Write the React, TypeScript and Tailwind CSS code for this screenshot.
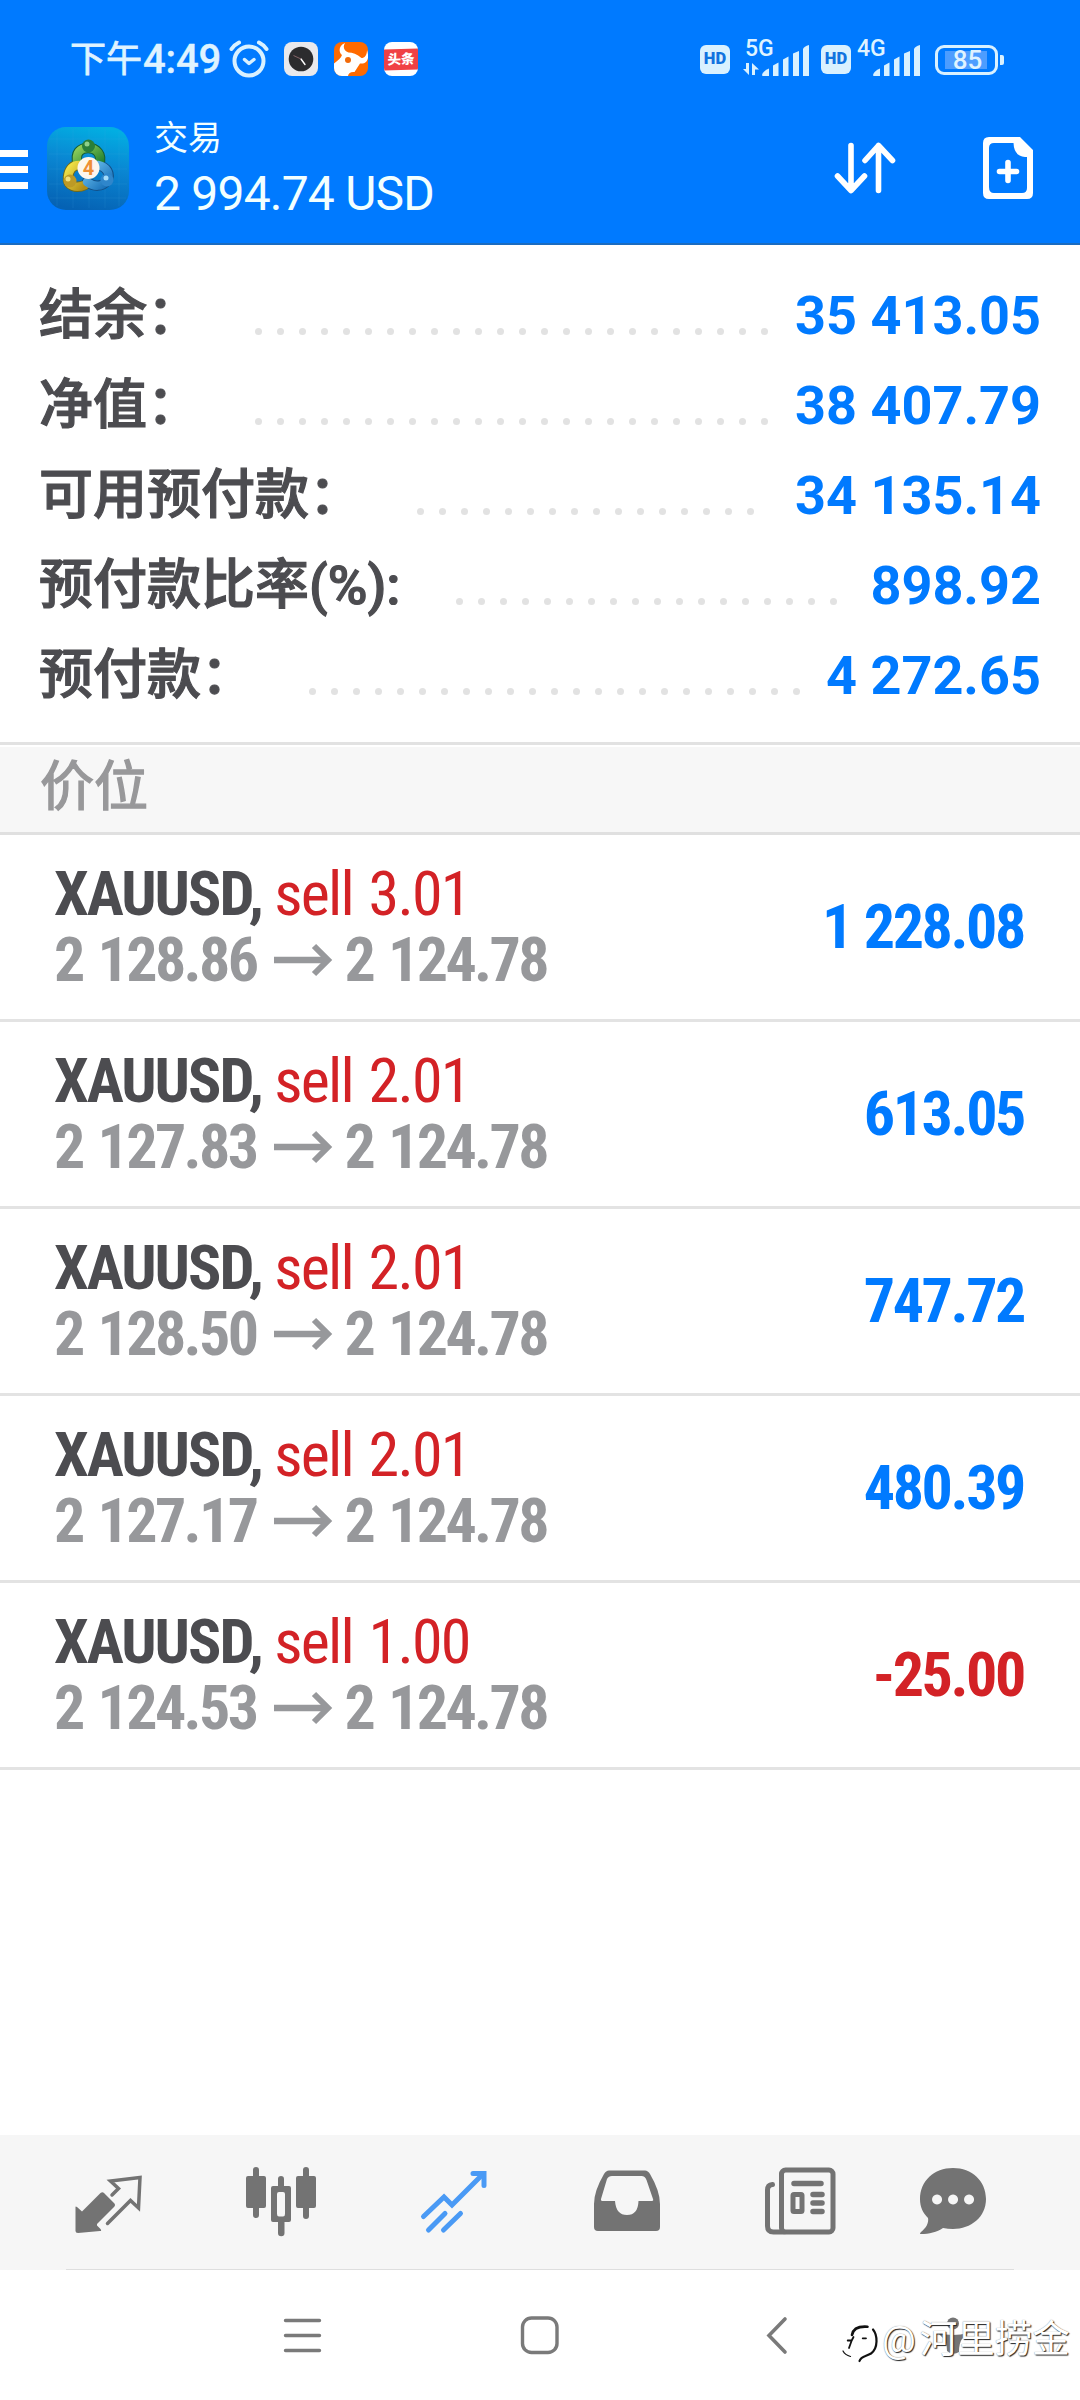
import type { ReactNode } from "react";
import clsx from "clsx";

type Summary = { label: string; value: string; dots: number; labelWidth: string };
type Position = { volume: string; open: string; current: string; profit: string };

const summary: Summary[] = [
  { label: "结余：", value: "35 413.05", dots: 24, labelWidth: "w-[208px]" },
  { label: "净值：", value: "38 407.79", dots: 24, labelWidth: "w-[208px]" },
  { label: "可用预付款：", value: "34 135.14", dots: 16, labelWidth: "w-[370px]" },
  { label: "预付款比率(%):", value: "898.92", dots: 18, labelWidth: "w-[409px]" },
  { label: "预付款：", value: "4 272.65", dots: 23, labelWidth: "w-[262px]" },
];

const positions: Position[] = [
  { volume: "3.01", open: "2 128.86", current: "2 124.78", profit: "1 228.08" },
  { volume: "2.01", open: "2 127.83", current: "2 124.78", profit: "613.05" },
  { volume: "2.01", open: "2 128.50", current: "2 124.78", profit: "747.72" },
  { volume: "2.01", open: "2 127.17", current: "2 124.78", profit: "480.39" },
  { volume: "1.00", open: "2 124.53", current: "2 124.78", profit: "-25.00" },
];

function AlarmIcon() {
  return (
    <svg width="40" height="38" viewBox="0 0 40 38" fill="none" stroke="#d9f1ff" strokeLinecap="round">
      <circle cx="20" cy="21" r="14.5" strokeWidth="4" />
      <path d="M2.5 9 C4.5 6 7 4 10 2.5 M37.5 9 C35.5 6 33 4 30 2.5" strokeWidth="4" />
      <path d="M15.5 19.5 L20 23.5 L25 19.5" strokeWidth="3.4" strokeLinejoin="round" />
    </svg>
  );
}

function ClockAppIcon() {
  return (
    <svg width="34" height="34" viewBox="0 0 34 34">
      <rect width="34" height="34" rx="8" fill="#e9e9ec" />
      <circle cx="17" cy="17" r="12.3" fill="#2c2c2e" />
      <path d="M17 17 L21 22.5" stroke="#fff" strokeWidth="1.4" strokeLinecap="round" />
      <path d="M17 17 L9.5 13.5" stroke="#8f6a6e" strokeWidth="0.9" />
    </svg>
  );
}

function BullAppIcon() {
  return (
    <svg width="34" height="34" viewBox="0 0 34 34">
      <defs>
        <clipPath id="bull-tile">
          <rect width="34" height="34" rx="8" />
        </clipPath>
      </defs>
      <g clipPath="url(#bull-tile)">
        <rect width="34" height="34" fill="#ff6a00" />
        <path
          d="M11 1 C5 3.500 4 9.500 8 13 C7 16 4 18.500 0 21.500 V34 H14 C14.500 31 17 29.500 20.500 30 L26 21.500 C32.500 22.500 36 17 33 8 C33 13.500 30.500 16 27.500 16 C23 12 18.500 10.500 14.500 10.500 C10 9 8.500 5 11 1 Z"
          fill="#fff"
        />
        <circle cx="14" cy="18" r="3" fill="#f26a0a" />
      </g>
    </svg>
  );
}

function HeadlineAppIcon() {
  return (
    <span className="flex h-[34px] w-[34px] flex-col justify-center overflow-hidden rounded-[8px] bg-white">
      <span className="flex h-[21px] -skew-y-2 items-center justify-center bg-[#f04145] text-[13.5px] leading-none font-black text-white">
        头条
      </span>
    </span>
  );
}

function HdBadge() {
  return (
    <span className="flex h-[29px] w-[30px] items-center justify-center rounded-[6px] bg-[#d9f1ff] text-[16.5px] leading-none font-black text-[#1173df]">
      HD
    </span>
  );
}

function SignalBars() {
  return (
    <svg width="48" height="32" viewBox="0 0 48 32" fill="#d9f1ff">
      <path d="M0 30 Q1 26 7 23.500 V31 H1 Q0 31 0 30 Z" />
      <path d="M11 20.500 L16.500 17.500 V31 H11 Z" />
      <path d="M21 14.500 L26.500 11.500 V31 H21 Z" />
      <path d="M31 8.500 L37 6 V31 H31 Z" />
      <path d="M41 4 Q42 1.500 47 0 V31 H41 Z" />
    </svg>
  );
}

function StatusBar() {
  return (
    <div className="flex h-[118px] items-center pt-px text-[#dff3ff]">
      <div className="mt-px ml-[70px] flex items-center">
        <span className="text-[36px] leading-none [-webkit-text-stroke:0.8px_#dff3ff]">下午</span>
        <span className="ml-px text-[40px] leading-none font-medium tracking-[-0.2px] [-webkit-text-stroke:0.4px_#dff3ff]">
          4:49
        </span>
      </div>
      <div className="absolute top-[40px] left-[229px] flex items-start">
        <AlarmIcon />
        <div className="mt-[2px] ml-[15px] flex gap-4">
          <ClockAppIcon />
          <BullAppIcon />
          <HeadlineAppIcon />
        </div>
      </div>

      <div className="mr-[76px] ml-auto flex items-center">
        <HdBadge />
        <div className="relative ml-[13px] flex h-[36px] w-[67px] items-end justify-end pb-px">
          <span className="absolute top-[-5px] left-[2px] text-[23px] leading-none font-medium">5G</span>
          <svg className="absolute bottom-[3px] left-0" width="16" height="12" viewBox="0 0 16 12" fill="#d9f1ff">
            <path d="M3 0 H6 V12 L0 6 H3 Z" />
            <path d="M9 12 H12 V6.500 H16 L9 0 Z" />
          </svg>
          <SignalBars />
        </div>
        <span className="ml-[11px]">
          <HdBadge />
        </span>
        <div className="relative ml-[6px] flex h-[36px] w-[64px] items-end justify-end pb-px">
          <span className="absolute top-[-5px] left-0 text-[23px] leading-none font-medium">4G</span>
          <SignalBars />
        </div>
        <div className="ml-[14px] flex h-[30px] w-[63px] items-center justify-center rounded-[9px] border-[3px] border-[#d9f1ff]">
          <span className="flex h-[18px] w-[42px] -translate-x-px items-center justify-center bg-[#4d9dff] text-[26px] leading-none font-medium">
            <span className="pl-[4px]">85</span>
          </span>
        </div>
        <span className="ml-[2px] h-[10px] w-[4px] rounded-r-[2px] bg-[#d9f1ff]" />
      </div>
    </div>
  );
}

function MetaTraderLogo() {
  return (
    <svg width="82" height="83" viewBox="0 0 82 83">
      <defs>
        <linearGradient id="tile" x1="0.6" y1="0" x2="0.4" y2="1">
          <stop offset="0" stopColor="#02aee2" />
          <stop offset="0.45" stopColor="#0a86d2" />
          <stop offset="1" stopColor="#0562b4" />
        </linearGradient>
        <linearGradient id="green" x1="0" y1="0" x2="1" y2="1">
          <stop offset="0" stopColor="#8fce5b" />
          <stop offset="1" stopColor="#1d7d2f" />
        </linearGradient>
        <linearGradient id="yellow" x1="0" y1="0" x2="1" y2="1">
          <stop offset="0" stopColor="#f3e64a" />
          <stop offset="1" stopColor="#b18c16" />
        </linearGradient>
        <linearGradient id="azure" x1="0" y1="0" x2="1" y2="1">
          <stop offset="0" stopColor="#6cc1f0" />
          <stop offset="1" stopColor="#176fb8" />
        </linearGradient>
      </defs>
      <rect width="82" height="83" rx="19" fill="url(#tile)" />
      <path
        d="M10 4 V79 M26 2 V81 M42 2 V81 M58 2 V81 M72 4 V79 M3 12 H79 M2 27 H80 M2 42 H80 M2 57 H80 M3 71 H79"
        stroke="#49b4ec"
        strokeOpacity="0.16"
        strokeWidth="0.9"
      />
      <g fill="none" strokeLinecap="round">
        <path d="M31 38 C27 25 34 21 41 21 C49 21 56 27 52 38" stroke="#145c34" strokeWidth="10.500" />
        <path d="M38 58 C29 62 20 59 21 50 C22 42 26 38 32 38" stroke="#6f6a1c" strokeWidth="10.500" />
        <path d="M51 38 C60 40 64 47 60 54 C55 60 47 60 40 55" stroke="#134f86" strokeWidth="10.500" />
        <path d="M31 38 C27 25 34 21 41 21 C49 21 56 27 52 38" stroke="url(#green)" strokeWidth="8.500" />
        <path d="M38 58 C29 62 20 59 21 50 C22 42 26 38 32 38" stroke="url(#yellow)" strokeWidth="8.500" />
        <path d="M51 38 C60 40 64 47 60 54 C55 60 47 60 40 55" stroke="url(#azure)" strokeWidth="8.500" />
      </g>
      <circle cx="41.500" cy="19" r="6.500" fill="#2a7f3a" />
      <circle cx="40" cy="17" r="2.500" fill="#8fd08a" />
      <circle cx="23" cy="54" r="6.500" fill="#bd9a26" />
      <circle cx="21" cy="52" r="2.500" fill="#f2e07a" />
      <circle cx="60" cy="53" r="6.500" fill="#2f86cb" />
      <circle cx="59" cy="51" r="2.500" fill="#a5dcfa" />
      <circle cx="41.500" cy="41" r="11" fill="#fdf6ee" />
      <text x="41.500" y="48" textAnchor="middle" fontSize="20" fontWeight="700" fill="#ee8f36">
        4
      </text>
    </svg>
  );
}

function AppBar() {
  return (
    <div className="flex h-[101px] items-center">
      <div className="mt-[2px] flex w-[28px] flex-col gap-[9px]">
        <span className="h-[7px] bg-white" />
        <span className="h-[7px] bg-white" />
        <span className="h-[7px] bg-white" />
      </div>
      <span className="ml-[19px]">
        <MetaTraderLogo />
      </span>
      <div className="ml-[25px] flex h-[101px] flex-col text-[#f2ffff]">
        <span className="mt-[2px] text-[34px] leading-[36px]">交易</span>
        <span className="mt-[10px] text-[48px] leading-[56px] tracking-[-0.8px] whitespace-pre">2 994.74 USD</span>
      </div>
      <div className="mr-[47px] ml-auto flex items-center">
        <svg
          width="62"
          height="52"
          viewBox="0 0 62 52"
          fill="none"
          stroke="#fff"
          strokeWidth="5.600"
          strokeLinecap="round"
          strokeLinejoin="round"
          className="-mt-[2px]"
        >
          <path d="M17 3.500 V48.500 M3.500 34 L17 48.500 L30.500 34" />
          <path d="M44.500 48.500 V3.500 M31 18.500 L44.500 3.500 L58.500 18.500" />
        </svg>
        <svg className="-mt-[2px] ml-[87px]" width="50" height="62" viewBox="0 0 50 62" fill="none" stroke="#fff">
          <path
            fill="#fff"
            stroke="none"
            fillRule="evenodd"
            d="M6 0 H37 L50 13 V56 Q50 62 44 62 H6 Q0 62 0 56 V6 Q0 0 6 0 Z M11 6 Q6 6 6 11 V50 Q6 56 11 56 H39 Q44 56 44 51 V20 H42 Q31 19 30.500 6 Z"
          />
          <path d="M25 25.500 V43.500 M16.500 34.500 H33.500" strokeWidth="5.600" strokeLinecap="round" />
        </svg>
      </div>
    </div>
  );
}

function SummaryRow({ label, value, dots, labelWidth }: Summary) {
  return (
    <div className="flex h-[90px] pr-[39px] pl-[39px] text-[54px] leading-[90px]">
      <span
        className={clsx(
          "shrink-0 font-medium whitespace-nowrap text-[#4c4c50] [-webkit-text-stroke:1.2px_#4c4c50]",
          labelWidth
        )}
      >
        {label}
      </span>
      <span className="flex pt-[57px]">
        {Array.from({ length: dots }, (_, i) => (
          <span key={i} className="mx-[7.5px] h-[7px] w-[7px] rounded-full bg-[#e2e2e2]" />
        ))}
      </span>
      <span className="ml-auto font-bold whitespace-pre text-[#007aff]">{value}</span>
    </div>
  );
}

function PositionRow({ volume, open, current, profit }: Position) {
  const negative = profit.startsWith("-");

  return (
    <div className="flex h-[187px] items-center justify-between border-b-[3px] border-[#e3e3e3] pr-[56px] pl-[54px] font-['Roboto_Condensed','Roboto'] text-[62px] leading-[66px] [font-stretch:75%] whitespace-pre">
      <div>
        <div>
          <span className="font-bold tracking-[-2px] text-[#4c4c50]">XAUUSD, </span>
          <span className="tracking-[-1.75px] text-[#d32226] [word-spacing:3px]">sell {volume}</span>
        </div>
        <div className="flex items-center font-bold tracking-[-2.6px] text-[#97989b] [word-spacing:3px]">
          <span>{open}</span>
          <svg className="mr-[11px] ml-[17px]" width="60" height="34" viewBox="0 0 60 34" fill="none" stroke="#97989b">
            <path d="M0 17 H54" strokeWidth="6.500" />
            <path d="M40 3 L54 17 L40 31" strokeWidth="6" />
          </svg>
          <span>{current}</span>
        </div>
      </div>
      <span
        className={clsx(
          "font-bold tracking-[-2.4px] [word-spacing:1px]",
          negative ? "text-[#d32226]" : "text-[#007aff]"
        )}
      >
        {profit}
      </span>
    </div>
  );
}

function TabIcon({ children, className }: { children: ReactNode; className?: string }) {
  return (
    <svg className={clsx("shrink-0", className)} width="80" height="80" viewBox="0 0 80 80" fill="#737373">
      {children}
    </svg>
  );
}

function TabBar() {
  return (
    <div className="flex h-[135px] items-center bg-[#f6f6f6] pb-[4px] pl-[68px]">
      {/* quotes */}
      <TabIcon>
        <path d="M7.500 46 Q7.500 45 9 46 L14 50.500 L32.500 32 Q34.500 30.500 36 32 L46 42 Q48 44 46 46 L29 63 V64.500 L32.500 68 Q34 70 32 70 L10 72 Q7.500 72 7.500 70 Z" />
        <path
          d="M44 34 L50.500 27.500 L42.500 20 L72 16.500 L70.500 47 L62.500 39.500 L39.500 62.500"
          fill="none"
          stroke="#737373"
          strokeWidth="3.500"
          strokeLinecap="round"
        />
      </TabIcon>
      {/* charts */}
      <TabIcon className="ml-[93px]">
        <path d="M12 9 a3 3 0 0 1 6 0 V15 H23 Q25 15 25 17 V45 Q25 47 23 47 H18 V54 a3 3 0 0 1 -6 0 V47 H7 Q5 47 5 45 V17 Q5 15 7 15 H12 Z" />
        <path d="M62 9 a3 3 0 0 1 6 0 V15 H73 Q75 15 75 17 V45 Q75 47 73 47 H68 V55 a3 3 0 0 1 -6 0 V47 H57 Q55 47 55 45 V17 Q55 15 57 15 H62 Z" />
        <path
          fillRule="evenodd"
          d="M37 18 a3 3 0 0 1 6 0 V25 H48 Q50 25 50 27 V59 Q50 61 48 61 H43.500 V72 a3 3 0 0 1 -6.500 0 V61 H32 Q30 61 30 59 V27 Q30 25 32 25 H37 Z M38 31 Q36 31 36 33 V53 Q36 55.500 38 55.500 H42 Q44 55.500 44 53 V33 Q44 31 42 31 Z"
        />
      </TabIcon>
      {/* trade, active */}
      <TabIcon className="ml-[93px]">
        <g fill="none" stroke="#4a9af5" strokeWidth="5" strokeLinecap="round">
          <path d="M9.500 55.500 L30 36 L38 44 L69 13" />
          <path d="M59 12.500 H70 V24.500" />
          <path d="M14.500 69 L31 52.500 M29.500 69 L46.500 52.500" />
        </g>
      </TabIcon>
      {/* history */}
      <TabIcon className="ml-[93px]">
        <path
          fillRule="evenodd"
          d="M22 9.500 H58 Q61 9.500 63 13 Q73 30 73 43 V66 Q73 70 69 70 H11 Q7 70 7 66 V43 Q7 30 17 13 Q19 9.500 22 9.500 Z M25 15 Q21.500 15 20 18 L14 38 Q13.500 40 16 40 H28 Q29 54 40 54 Q51 54 51.500 40 H64 Q67 40 66 38 L59.500 19 Q58 15 54.500 15 Z"
        />
      </TabIcon>
      {/* news */}
      <TabIcon className="ml-[93px]">
        <g fill="none" stroke="#737373">
          <rect x="21.500" y="9" width="51.500" height="62" rx="4" strokeWidth="5" />
          <path d="M12.500 23.500 Q7.500 24 7.500 29 V65 Q7.500 71 13.500 71 H24" strokeWidth="5" strokeLinecap="round" />
          <rect x="33" y="33.500" width="9" height="17" rx="1" strokeWidth="5" />
          <path d="M34 22.500 H61 M53 33.500 H62 M53 42 H62 M53 50.500 H62" strokeWidth="5.500" strokeLinecap="round" />
        </g>
      </TabIcon>
      {/* chat */}
      <TabIcon className="ml-[73px]">
        <path
          fillRule="evenodd"
          d="M40 7 C59 7 73 20 73 38 C73 56 58 68 40 68 Q35 68 30 67 C24 71 16 73 8 73 Q6 73 8 71 C13 67 16 62 15 57 C10 52 7 46 7 38 C7 20 21 7 40 7 Z M24 33.500 a5 5 0 1 0 0.100 0 Z M40 33.500 a5 5 0 1 0 0.100 0 Z M56 33.500 a5 5 0 1 0 0.100 0 Z"
        />
      </TabIcon>
    </div>
  );
}

function Watermark() {
  return (
    <div className="absolute top-[2315px] left-[841px] flex items-center text-[37.5px] leading-[44px] whitespace-nowrap text-white [text-shadow:1px_1px_1px_#222,0_0_1px_#777]">
      <svg width="40" height="48" viewBox="0 0 40 48" fill="none" stroke="#111" strokeLinecap="round">
        <path d="M11 20 C12 14 17 11 26.500 11.700" strokeWidth="2.600" />
        <path d="M32 14.500 C36.500 20 37.500 33 30 38.500 C25 41.500 20 41 18.500 46" strokeWidth="2.200" />
        <path d="M6.700 25.500 H10.700 L12.500 22 M10.700 25.500 L8 33 M21.700 23.300 H25" strokeWidth="1.800" />
        <path d="M2 36 Q4 40 9.500 41.500" strokeWidth="1.200" />
      </svg>
      <span className="ml-px">@</span>
      <span className="ml-[4px]">河里捞金</span>
    </div>
  );
}

function SystemNav() {
  return (
    <div className="flex h-[130px] items-start pt-[45px]">
      <svg className="ml-[283px]" width="39" height="41" viewBox="0 0 39 41" stroke="#7a7a7a" strokeWidth="3.400" strokeLinecap="round">
        <path d="M2.500 5.500 H36.500 M2.500 20.500 H36.500 M2.500 35.500 H36.500" />
      </svg>
      <svg className="ml-[198px]" width="40" height="41" viewBox="0 0 40 41" fill="none" stroke="#7a7a7a" strokeWidth="3.400">
        <rect x="2.500" y="3" width="34.500" height="34.500" rx="9" />
      </svg>
      <svg className="ml-[206px]" width="24" height="41" viewBox="0 0 24 41" fill="none" stroke="#7a7a7a" strokeWidth="3.600">
        <path d="M19 4 L3 20.500 L19 37" strokeLinecap="round" />
      </svg>
      <svg className="ml-[147px]" width="32" height="41" viewBox="0 0 32 41" fill="#757575">
        <circle cx="16" cy="8.500" r="6" />
        <path d="M1 18 Q16 22 31 18 L25 24 Q22 28 22 37 Q16 41 10 36 Q10 26 6 23 Z" />
      </svg>
    </div>
  );
}

export default function App() {
  return (
    <div className="relative flex h-[2400px] w-[1080px] flex-col overflow-hidden bg-white font-['Roboto','Noto_Sans_CJK_SC',sans-serif]">
      <header className="relative h-[245px] border-b-2 border-[#1b6cc0] bg-[#007aff]">
        <StatusBar />
        <AppBar />
      </header>

      <section className="border-b-[3px] border-[#e2e2e2] pt-[26px] pb-[21px]">
        {summary.map((row) => (
          <SummaryRow key={row.label} {...row} />
        ))}
      </section>

      <h2 className="h-[90px] border-t-2 border-b-[3px] border-t-white border-b-[#e0e0e0] bg-[#f7f7f7] pl-[40px] text-[54px] leading-[81px] text-[#98989a] [-webkit-text-stroke:1.4px_#98989a]">
        价位
      </h2>

      <main className="flex-1">
        {positions.map((position) => (
          <PositionRow key={position.open} {...position} />
        ))}
      </main>

      <TabBar />
      <div className="-mt-px flex h-px px-[66px]">
        <span className="flex-1 bg-[#dedede]" />
      </div>
      <SystemNav />
      <Watermark />
    </div>
  );
}
